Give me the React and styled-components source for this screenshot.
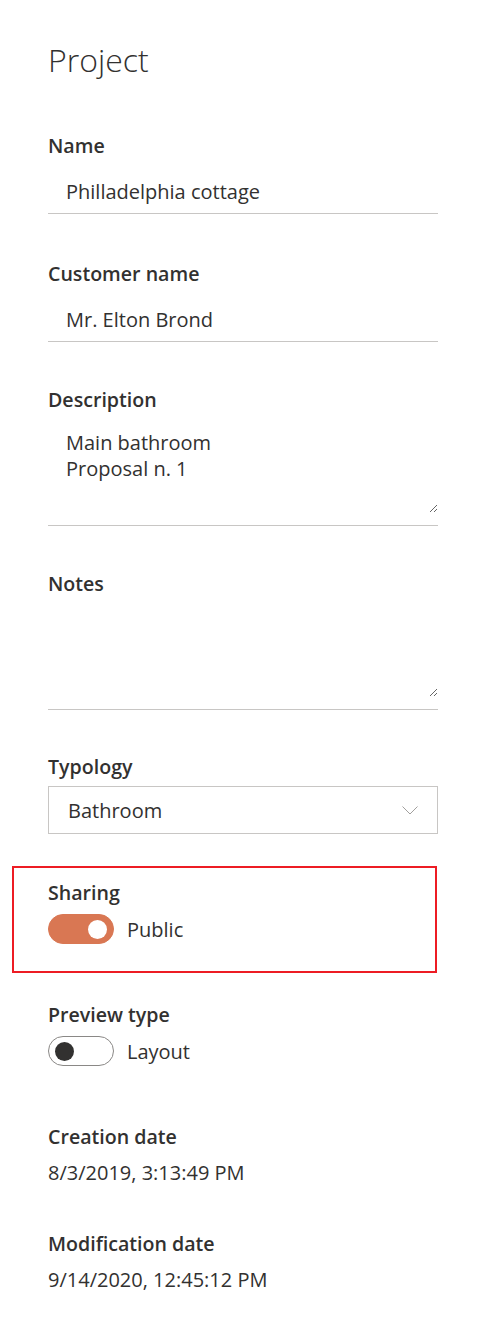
import React from 'react';
import styled, { createGlobalStyle } from 'styled-components';

const GlobalStyle = createGlobalStyle`
  body {
    margin: 0;
    background: #ffffff;
    font-family: "Open Sans", "Noto Sans", sans-serif;
    color: #323130;
  }
`;

const Panel = styled.div`
  display: flex;
  flex-direction: column;
  padding: 40px 39px 40px 48px;
  width: 477px;
  box-sizing: border-box;
`;

const Title = styled.h1`
  margin: 0 0 54px;
  font-size: 32px;
  font-weight: 300;
  line-height: 40px;
`;

const Field = styled.div`
  display: flex;
  flex-direction: column;
  margin-bottom: ${(p) => p.$gap || 46}px;
`;

const Label = styled.label`
  font-size: 19.6px;
  font-weight: 600;
  line-height: 24px;
`;

const Underlined = styled.div`
  border-bottom: 1px solid #c8c6c4;
  padding-bottom: ${(p) => p.$pad || 0}px;
`;

const TextInput = styled.input`
  display: block;
  width: 100%;
  box-sizing: border-box;
  height: 55px;
  padding: 19px 18px 8px;
  border: none;
  outline: none;
  font-family: inherit;
  font-size: 20px;
  line-height: 28px;
  color: #323130;
  background: transparent;
`;

const TextArea = styled.textarea`
  display: block;
  width: 100%;
  box-sizing: border-box;
  height: ${(p) => p.$h}px;
  margin-top: 16px;
  padding: 2px 18px;
  border: none;
  outline: none;
  resize: vertical;
  font-family: inherit;
  font-size: 20px;
  line-height: 26px;
  color: #323130;
  background: transparent;
`;

const Dropdown = styled.div`
  display: flex;
  align-items: center;
  justify-content: space-between;
  height: 48px;
  margin-top: 7px;
  padding: 0 19px;
  box-sizing: border-box;
  border: 1px solid #c8c6c4;
  font-size: 20px;
`;

const Highlight = styled.div`
  margin: -15px 1px 30px -36px;
  padding: 13px 0 27px 34px;
  border: 2px solid #ed1c24;
`;

const ToggleRow = styled.div`
  display: flex;
  align-items: center;
  gap: 13px;
  margin-top: 9px;
  font-size: 20px;
`;

const Track = styled.span`
  display: flex;
  align-items: center;
  justify-content: ${(p) => (p.$on ? 'flex-end' : 'flex-start')};
  width: 66px;
  height: 30px;
  box-sizing: border-box;
  padding: 0 6px;
  border-radius: 15px;
  border: 1px solid ${(p) => (p.$on ? '#d97753' : '#8a8886')};
  background: ${(p) => (p.$on ? '#d97753' : '#ffffff')};
`;

const Knob = styled.span`
  width: 19px;
  height: 19px;
  border-radius: 50%;
  background: ${(p) => (p.$on ? '#ffffff' : '#323130')};
`;

const Value = styled.div`
  margin-top: 10px;
  font-size: 20px;
  line-height: 28px;
`;

function Toggle({ on, text }) {
  return (
    <ToggleRow>
      <Track $on={on}>
        <Knob $on={on} />
      </Track>
      {text}
    </ToggleRow>
  );
}

export default function App() {
  return (
    <Panel>
      <GlobalStyle />
      <Title>Project</Title>

      <Field $gap={48}>
        <Label>Name</Label>
        <Underlined>
          <TextInput readOnly value="Philladelphia cottage" />
        </Underlined>
      </Field>

      <Field>
        <Label>Customer name</Label>
        <Underlined>
          <TextInput readOnly value="Mr. Elton Brond" />
        </Underlined>
      </Field>

      <Field>
        <Label>Description</Label>
        <Underlined $pad={12}>
          <TextArea $h={85} readOnly value={'Main bathroom\nProposal n. 1'} />
        </Underlined>
      </Field>

      <Field $gap={45}>
        <Label>Notes</Label>
        <Underlined $pad={12}>
          <TextArea $h={85} readOnly value="" />
        </Underlined>
      </Field>

      <Field $gap={47}>
        <Label>Typology</Label>
        <Dropdown>
          Bathroom
          <svg width="16" height="9" viewBox="0 0 16 9">
            <path d="M0.5 0.5 L8 8 L15.5 0.5" fill="none" stroke="#a19f9d" strokeWidth="1" />
          </svg>
        </Dropdown>
      </Field>

      <Highlight>
        <Label>Sharing</Label>
        <Toggle on text="Public" />
      </Highlight>

      <Field $gap={59}>
        <Label>Preview type</Label>
        <Toggle text="Layout" />
      </Field>

      <Field $gap={45}>
        <Label>Creation date</Label>
        <Value>8/3/2019, 3:13:49 PM</Value>
      </Field>

      <Field $gap={0}>
        <Label>Modification date</Label>
        <Value>9/14/2020, 12:45:12 PM</Value>
      </Field>
    </Panel>
  );
}
